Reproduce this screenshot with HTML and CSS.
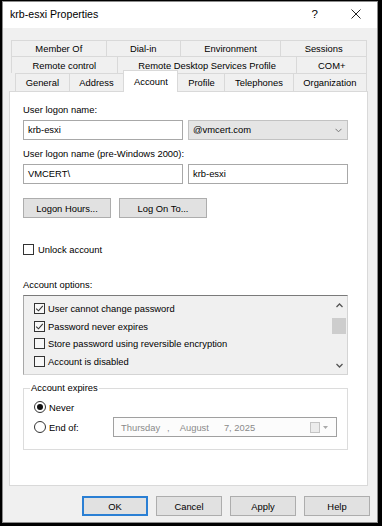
FILE: index.html
```html
<!DOCTYPE html>
<html lang="en">
<head>
  <meta charset="UTF-8" />
  <title>krb-esxi Properties</title>
  <link rel="stylesheet" href="styles.css">
</head>
<body>
  <div class="window">
    <div class="titlebar">
      <span class="title">krb-esxi Properties</span>
      <span class="help">?</span>
      <span class="close">
        <svg width="10" height="10" viewBox="0 0 10 10"><path d="M0.5 0.5 L9.5 9.5 M9.5 0.5 L0.5 9.5" stroke="#222" stroke-width="1" fill="none"/></svg>
      </span>
    </div>

    <div class="tabs">
      <div class="tab-row back first">
        <div class="tab">Member Of</div>
        <div class="tab">Dial-in</div>
        <div class="tab">Environment</div>
        <div class="tab">Sessions</div>
      </div>
      <div class="tab-row back second">
        <div class="tab">Remote control</div>
        <div class="tab">Remote Desktop Services Profile</div>
        <div class="tab">COM+</div>
      </div>
      <div class="tab-row front">
        <div class="tab">General</div>
        <div class="tab">Address</div>
        <div class="tab active">Account</div>
        <div class="tab">Profile</div>
        <div class="tab">Telephones</div>
        <div class="tab">Organization</div>
      </div>
    </div>

    <div class="panel">
      <div class="label">User logon name:</div>
      <div class="field-row">
        <div class="textbox">krb-esxi</div>
        <div class="textbox combo">
          <span>@vmcert.com</span>
          <svg width="7" height="5" viewBox="0 0 7 5"><path d="M0.5 0.8 L3.5 3.8 L6.5 0.8" stroke="#777" stroke-width="1" fill="none"/></svg>
        </div>
      </div>

      <div class="label second-label">User logon name (pre-Windows 2000):</div>
      <div class="field-row">
        <div class="textbox">VMCERT\</div>
        <div class="textbox">krb-esxi</div>
      </div>

      <div class="button-row">
        <div class="button wide">Logon Hours...</div>
        <div class="button wide">Log On To...</div>
      </div>

      <div class="check-row unlock">
        <span class="checkbox"></span>
        <span>Unlock account</span>
      </div>

      <div class="label options-label">Account options:</div>
      <div class="listbox">
        <div class="list-items">
          <div class="list-item">
            <span class="checkbox checked">
              <svg width="9" height="9" viewBox="0 0 9 9"><path d="M1.2 4.6 L3.5 6.8 L7.8 1.8" stroke="#333" stroke-width="1.1" fill="none"/></svg>
            </span>
            <span>User cannot change password</span>
          </div>
          <div class="list-item">
            <span class="checkbox checked">
              <svg width="9" height="9" viewBox="0 0 9 9"><path d="M1.2 4.6 L3.5 6.8 L7.8 1.8" stroke="#333" stroke-width="1.1" fill="none"/></svg>
            </span>
            <span>Password never expires</span>
          </div>
          <div class="list-item">
            <span class="checkbox"></span>
            <span>Store password using reversible encryption</span>
          </div>
          <div class="list-item">
            <span class="checkbox"></span>
            <span>Account is disabled</span>
          </div>
        </div>
        <div class="scrollbar">
          <div class="scroll-btn">
            <svg width="7" height="5" viewBox="0 0 7 5"><path d="M0.5 4 L3.5 1 L6.5 4" stroke="#555" stroke-width="1.3" fill="none"/></svg>
          </div>
          <div class="thumb"></div>
          <div class="scroll-btn down">
            <svg width="7" height="5" viewBox="0 0 7 5"><path d="M0.5 1 L3.5 4 L6.5 1" stroke="#555" stroke-width="1.3" fill="none"/></svg>
          </div>
        </div>
      </div>

      <fieldset class="group">
        <legend>Account expires</legend>
        <div class="radio-row">
          <span class="radio selected"></span>
          <span>Never</span>
        </div>
        <div class="radio-row end-row">
          <div class="radio-label">
            <span class="radio"></span>
            <span>End of:</span>
          </div>
          <div class="datebox">
            <span>Thursday</span>
            <span class="comma">,</span>
            <span class="month">August</span>
            <span class="day">7, 2025</span>
            <span class="cal-icon"></span>
            <svg class="cal-arrow" width="5" height="3" viewBox="0 0 5 3"><path d="M0 0 L5 0 L2.5 3 Z" fill="#aaa"/></svg>
          </div>
        </div>
      </fieldset>
    </div>

    <div class="footer">
      <div class="button default">OK</div>
      <div class="button">Cancel</div>
      <div class="button">Apply</div>
      <div class="button">Help</div>
    </div>
  </div>
</body>
</html>
```

FILE: styles.css
```css
body {
  margin: 0;
  background: #000;
  font-family: "Liberation Sans", Arial, sans-serif;
  font-size: 9.4px;
  color: #000;
}

.window {
  margin: 1px 4px 0 2px;
  height: 522px;
  box-sizing: border-box;
  border: 1px solid #8c8c8c;
  background: #f0f0f0;
}

/* title bar */
.titlebar {
  height: 26px;
  padding: 0 16px 3px 7px;
  box-sizing: border-box;
  background: #fff;
  display: flex;
  align-items: center;
}

.title {
  font-size: 10.6px;
}

.help {
  margin-left: auto;
  margin-right: 33px;
  font-size: 11.5px;
}

.close {
  display: flex;
}

/* tabs */
.tabs {
  margin-top: 12px;
}

.tab-row {
  display: flex;
  margin: 0 10px 0 8px;
}

.tab-row.first {
  height: 16px;
  line-height: 16px;
}

.tab-row.second {
  height: 17px;
  line-height: 17px;
}

.tab-row.front {
  height: 18px;
  line-height: 18px;
  margin-left: 12px;
}

.tab {
  flex: 1 1 auto;
  text-align: center;
  white-space: nowrap;
  border: 1px solid #d9d9d9;
  border-bottom: 0;
  margin-left: -1px;
  background: #f0f0f0;
}

.tab:first-child {
  margin-left: 0;
}

.tab.active {
  position: relative;
  z-index: 1;
  margin-top: -3px;
  margin-bottom: -1px;
  padding: 2px 0;
  background: #fff;
}

/* panel */
.panel {
  margin: 0 9px 0 6px;
  height: 395px;
  box-sizing: border-box;
  padding: 12px 19px 0 13px;
  background: #fff;
  border: 1px solid #d9d9d9;
}

.label {
  line-height: 12px;
}

.second-label {
  margin-top: 8px;
}

.options-label {
  margin-top: 23px;
}

.field-row {
  display: flex;
  gap: 5px;
  margin-top: 4px;
}

.textbox {
  width: 160px;
  height: 20px;
  box-sizing: border-box;
  border: 1px solid #a8a8a8;
  padding-left: 4px;
  line-height: 18px;
  background: #fff;
}

.combo {
  display: flex;
  align-items: center;
  justify-content: space-between;
  padding: 0 5px 0 4px;
  background: #e5e5e5;
  border-color: #c2c2c2;
}

.button-row {
  display: flex;
  gap: 8px;
  margin-top: 14px;
}

.button {
  width: 66px;
  height: 20px;
  box-sizing: border-box;
  border: 1px solid #adadad;
  background: #e1e1e1;
  display: flex;
  align-items: center;
  justify-content: center;
}

.button.wide {
  width: 88px;
}

.button.default {
  border: 2px solid #2a7fd4;
}

.check-row {
  display: flex;
  align-items: center;
  gap: 4px;
  height: 14px;
}

.unlock {
  margin-top: 24px;
}

.checkbox {
  width: 11px;
  height: 11px;
  box-sizing: border-box;
  border: 1px solid #333;
  background: #fff;
  display: flex;
  align-items: center;
  justify-content: center;
  flex: none;
}

/* account options list */
.listbox {
  margin-top: 4px;
  height: 80px;
  box-sizing: border-box;
  border: 1px solid #d4d4d4;
  border-top-color: #7a7a7a;
  border-left-color: #a8a8a8;
  background: #f0f0f0;
  display: flex;
}

.list-items {
  flex: 1;
  padding: 4px 0 0 10px;
}

.list-item {
  height: 17.5px;
  display: flex;
  align-items: center;
  gap: 3px;
}

.list-item .checkbox {
  background: #f7f7f7;
}

.scrollbar {
  width: 16px;
  display: flex;
  flex-direction: column;
  align-items: center;
}

.scroll-btn {
  height: 18px;
  display: flex;
  align-items: center;
  justify-content: center;
}

.scroll-btn.down {
  margin-top: auto;
}

.thumb {
  width: 14px;
  height: 16px;
  margin-top: 4px;
  background: #cdcdcd;
}

/* account expires group */
.group {
  margin: 7px 0 0;
  padding: 6px 10px 12px;
  border: 1px solid #dcdcdc;
  min-width: 0;
}

.group legend {
  padding: 0 1px;
  margin-left: -4px;
  line-height: 12px;
}

.radio-row {
  display: flex;
  align-items: center;
  gap: 3px;
  height: 14px;
}

.end-row {
  margin-top: 3px;
  height: 20px;
  gap: 0;
}

.radio-label {
  width: 79px;
  display: flex;
  align-items: center;
  gap: 3px;
}

.radio {
  width: 12px;
  height: 12px;
  box-sizing: border-box;
  border: 1px solid #333;
  border-radius: 50%;
  background: #fff;
  display: flex;
  align-items: center;
  justify-content: center;
  flex: none;
}

.radio.selected::after {
  content: "";
  width: 6px;
  height: 6px;
  border-radius: 50%;
  background: #111;
}

.datebox {
  width: 224px;
  height: 20px;
  box-sizing: border-box;
  border: 1px solid #a0a0a0;
  background: #fcfcfc;
  color: #8a8a8a;
  display: flex;
  align-items: center;
  padding: 0 8px 0 7px;
}

.comma {
  margin-left: 7px;
}

.month {
  margin-left: 10px;
}

.day {
  margin-left: 15px;
}

.cal-icon {
  margin-left: auto;
  width: 8px;
  height: 9px;
  border: 1px solid #c4c4c4;
  background: #ececec;
}

.cal-arrow {
  margin-left: 3px;
}

/* dialog buttons */
.footer {
  display: flex;
  justify-content: flex-end;
  gap: 8px;
  margin-top: 10px;
  padding-right: 7px;
}
```
